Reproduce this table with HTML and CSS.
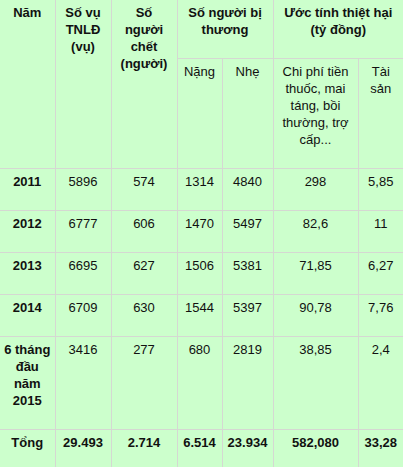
FILE: index.html
```html
<!DOCTYPE html>
<html lang="vi">
<head>
<meta charset="utf-8">
<title>Thống kê tai nạn lao động</title>
<link rel="stylesheet" href="styles.css">
</head>
<body>
<table class="stats">
  <colgroup>
    <col class="c-year">
    <col class="c-cases">
    <col class="c-dead">
    <col class="c-heavy">
    <col class="c-light">
    <col class="c-cost">
    <col class="c-asset">
  </colgroup>
  <thead>
    <tr>
      <th rowspan="2">Năm</th>
      <th rowspan="2">Số vụ TNLĐ (vụ)</th>
      <th rowspan="2">Số<br>người chết (người)</th>
      <th colspan="2">Số người bị thương</th>
      <th colspan="2">Ước tính thiệt hại (tỷ đồng)</th>
    </tr>
    <tr>
      <td>Nặng</td>
      <td>Nhẹ</td>
      <td>Chi phí tiền thuốc, mai táng, bồi thường, trợ cấp...</td>
      <td>Tài sản</td>
    </tr>
  </thead>
  <tbody>
    <tr>
      <th>2011</th><td>5896</td><td>574</td><td>1314</td><td>4840</td><td>298</td><td>5,85</td>
    </tr>
    <tr>
      <th>2012</th><td>6777</td><td>606</td><td>1470</td><td>5497</td><td>82,6</td><td>11</td>
    </tr>
    <tr>
      <th>2013</th><td>6695</td><td>627</td><td>1506</td><td>5381</td><td>71,85</td><td>6,27</td>
    </tr>
    <tr>
      <th>2014</th><td>6709</td><td>630</td><td>1544</td><td>5397</td><td>90,78</td><td>7,76</td>
    </tr>
    <tr>
      <th>6 tháng đầu năm 2015</th><td>3416</td><td>277</td><td>680</td><td>2819</td><td>38,85</td><td>2,4</td>
    </tr>
    <tr class="total">
      <th>Tổng</th><td>29.493</td><td>2.714</td><td>6.514</td><td>23.934</td><td>582,080</td><td>33,28</td>
    </tr>
  </tbody>
</table>
</body>
</html>
```

FILE: styles.css
```css
html, body {
  margin: 0;
  padding: 0;
  background: #ccffcc;
}

.stats {
  width: 403px;
  table-layout: fixed;
  border-collapse: collapse;
  font-family: "Liberation Sans", Arial, sans-serif;
  font-size: 13px;
  line-height: 17px;
  color: #111;
  background: #ccffcc;
}

.c-year { width: 55px; }
.c-cases { width: 56px; }
.c-dead { width: 66px; }
.c-heavy { width: 45px; }
.c-light { width: 51px; }
.c-cost { width: 85px; }
.c-asset { width: 45px; }

.stats th,
.stats td {
  padding: 4px 3px 20px;
  vertical-align: top;
  text-align: center;
  border: 1px solid #d5d8d2;
}

.stats th {
  font-weight: bold;
}

.stats td {
  font-weight: normal;
}

.stats tr:first-child > * {
  border-top: none;
}

.stats tr > :first-child {
  border-left: none;
}

.stats tr > :last-child {
  border-right: none;
}

.stats .total td {
  font-weight: bold;
}
```
